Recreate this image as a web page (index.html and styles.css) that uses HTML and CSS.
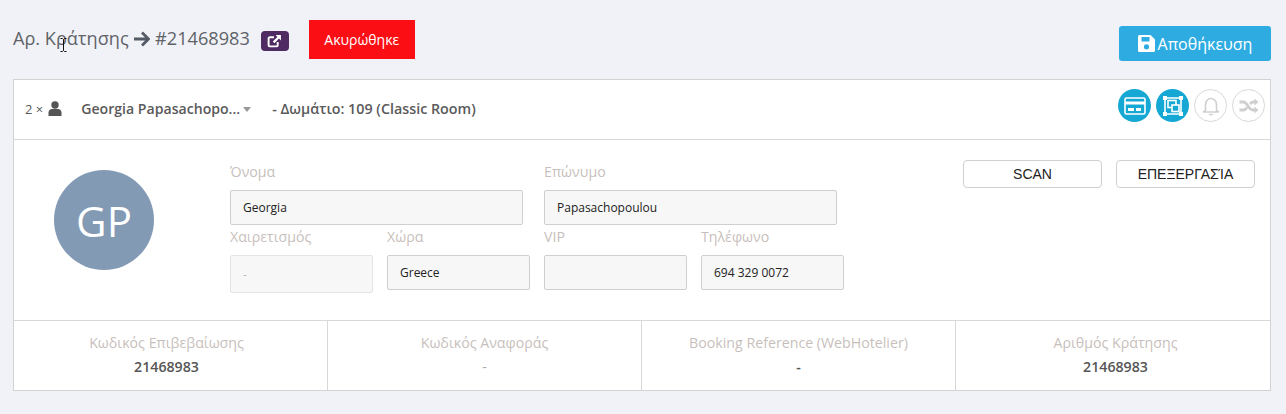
FILE: index.html
```html
<!DOCTYPE html>
<html lang="el">
<head>
<meta charset="utf-8">
<title>Κράτηση</title>
<link rel="stylesheet" href="styles.css">
</head>
<body>
<div class="top">
  <div class="title-wrap">
    <h1 class="title">Αρ. Κράτησης <svg class="arrow" viewBox="0 0 17 16" width="17" height="16"><path d="M9 1.5 L15.5 8 L9 14.5 M15 8 H1" fill="none" stroke="#555b66" stroke-width="2.8"/></svg> #21468983</h1>
    <svg class="cursor" width="7" height="14" viewBox="0 0 7 14"><path d="M0.5 0.5H2.5L3.5 1.5L4.5 0.5H6.5M3.5 1.5V12.5M0.5 13.5H2.5L3.5 12.5L4.5 13.5H6.5" fill="none" stroke="#111" stroke-width="1"/></svg>
  </div>
  <span class="ext-badge"><svg width="15" height="14" viewBox="0 0 14 13"><path d="M10 7.5V10.5A1 1 0 0 1 9 11.5H2.5A1 1 0 0 1 1.5 10.5V4A1 1 0 0 1 2.5 3H6.5" fill="none" stroke="#fff" stroke-width="1.8"/><path d="M8 1H13V6L11.2 4.2L7 8.6L5.4 7L9.7 2.7Z" fill="#fff"/></svg></span>
  <span class="status">Ακυρώθηκε</span>
  <button class="save"><svg width="17" height="17" viewBox="0 0 17 17"><path fill-rule="evenodd" d="M1.5 0H12.5L17 4.5V15.5A1.5 1.5 0 0 1 15.5 17H1.5A1.5 1.5 0 0 1 0 15.5V1.5A1.5 1.5 0 0 1 1.5 0ZM3.5 2V6.5H11.5V2ZM8.5 9.2A2.6 2.6 0 1 0 8.5 14.4A2.6 2.6 0 1 0 8.5 9.2Z" fill="#fff"/></svg>Αποθήκευση</button>
</div>

<section class="card">
  <header class="card-head">
    <span class="count">2 ×</span>
    <svg class="person" width="14" height="15" viewBox="0 0 14 15"><circle cx="7" cy="4" r="3.7" fill="#555"/><path d="M0.5 15V11.5C0.5 9 2.5 8 4 8H10C11.5 8 13.5 9 13.5 11.5V15Z" fill="#555"/></svg>
    <span class="guest">Georgia Papasachopo...</span>
    <span class="caret"></span>
    <span class="room">- Δωμάτιο: 109 (Classic Room)</span>
    <div class="head-icons">
      <span class="round on"><svg width="22" height="18" viewBox="0 0 22 18"><rect x="1" y="1" width="20" height="16" rx="1.5" fill="none" stroke="#fff" stroke-width="1.6"/><rect x="1" y="4.5" width="20" height="3" fill="#fff"/><rect x="4" y="11" width="6" height="3" fill="#fff"/><rect x="12" y="11" width="5" height="3" fill="#fff"/></svg></span>
      <span class="round on"><svg width="22" height="22" viewBox="0 0 22 22"><path d="M3 3H19V19H3Z" fill="none" stroke="#fff" stroke-width="1.6"/><g fill="#fff"><rect x="1" y="1" width="4" height="4"/><rect x="17" y="1" width="4" height="4"/><rect x="1" y="17" width="4" height="4"/><rect x="17" y="17" width="4" height="4"/></g><rect x="6" y="5.5" width="8" height="7" fill="none" stroke="#fff" stroke-width="1.6"/><rect x="10" y="10" width="7" height="6.5" fill="#16a8d5" stroke="#fff" stroke-width="1.6"/></svg></span>
      <span class="round off"><svg width="18" height="20" viewBox="0 0 18 20"><path d="M3.5 14.5V8.5C3.5 5 6 2.5 9 2.5S14.5 5 14.5 8.5V14.5L16.5 16H1.5Z" fill="none" stroke="#cfcfcf" stroke-width="1.6" stroke-linejoin="round"/><path d="M7 18Q9 19.5 11 18" fill="none" stroke="#cfcfcf" stroke-width="1.3"/></svg></span>
      <span class="round off"><svg width="20" height="16" viewBox="0 0 20 16"><path d="M0.5 4H4.5C8 4 10 12 13.5 12H16M0.5 12H4.5C6 12 7 11 8 9.5M11 6C12 4.8 12.7 4 14 4H16" fill="none" stroke="#cfcfcf" stroke-width="2.8"/><path d="M15.5 0.5L19.5 4L15.5 7.5ZM15.5 8.5L19.5 12L15.5 15.5Z" fill="#cfcfcf"/></svg></span>
    </div>
  </header>

  <div class="guest-body">
    <div class="avatar-col"><div class="avatar">GP</div></div>
    <div class="fields">
      <div class="row row-wide">
        <label class="field wide"><span class="lbl">Όνομα</span><span class="input">Georgia</span></label>
        <label class="field wide"><span class="lbl">Επώνυμο</span><span class="input">Papasachopoulou</span></label>
      </div>
      <div class="row row-narrow">
        <label class="field narrow"><span class="lbl">Χαιρετισμός</span><span class="input disabled">-</span></label>
        <label class="field narrow"><span class="lbl">Χώρα</span><span class="input">Greece</span></label>
        <label class="field narrow"><span class="lbl">VIP</span><span class="input"></span></label>
        <label class="field narrow"><span class="lbl">Τηλέφωνο</span><span class="input">694 329 0072</span></label>
      </div>
    </div>
    <div class="actions">
      <button class="btn">SCAN</button>
      <button class="btn">ΕΠΕΞΕΡΓΑΣΊΑ</button>
    </div>
  </div>

  <div class="refs">
    <div class="ref ref-first"><div class="ref-lbl">Κωδικός Επιβεβαίωσης</div><div class="ref-val">21468983</div></div>
    <div class="ref"><div class="ref-lbl">Κωδικός Αναφοράς</div><div class="ref-val dash">-</div></div>
    <div class="ref"><div class="ref-lbl">Booking Reference (WebHotelier)</div><div class="ref-val">-</div></div>
    <div class="ref ref-last"><div class="ref-lbl">Αριθμός Κράτησης</div><div class="ref-val">21468983</div></div>
  </div>
</section>
</body>
</html>
```
FILE: styles.css
```css
* { box-sizing: border-box; }
html, body { margin: 0; padding: 0; }
body {
  background: #f1f2f7;
  font-family: "Open Sans", sans-serif;
  color: #555;
  height: 414px;
  overflow: hidden;
  padding: 20px 15px 0 13px;
}
.top {
  display: flex;
  align-items: flex-start;
  height: 59px;
}
.title-wrap { position: relative; margin-top: 4px; }
.title {
  margin: 0;
  font-size: 18.15px;
  font-weight: 400;
  line-height: 28px;
  color: #5f6368;
  white-space: nowrap;
}
.arrow { vertical-align: -2px; }
.cursor { position: absolute; left: 47px; top: 14px; }
.ext-badge {
  width: 28px;
  height: 20px;
  margin: 11px 20px 0 11px;
  background: #4f2a63;
  border-radius: 4px;
  display: flex;
  align-items: center;
  justify-content: center;
}
.status {
  width: 106px;
  height: 39px;
  background: #fb0f14;
  color: #fff;
  font-size: 14px;
  display: flex;
  align-items: center;
  justify-content: center;
}
.save {
  margin: 6px 0 0 auto;
  width: 152px;
  height: 35px;
  background: #2eace2;
  border: 0;
  border-radius: 3px;
  color: #fff;
  font-family: "Open Sans", sans-serif;
  font-size: 16px;
  display: flex;
  align-items: center;
  justify-content: center;
  gap: 3px;
  padding: 0;
}
.card {
  background: #fff;
  border: 1px solid #d2d2d2;
  height: 312px;
  width: 1258px;
}
.card-head {
  height: 60px;
  border-bottom: 1px solid #d8d8d8;
  display: flex;
  align-items: center;
  padding: 0 5px 2px 11px;
  font-size: 13px;
  font-weight: 600;
  color: #5a5a5a;
}
.count { font-weight: 400; font-size: 13px; }
.person { margin: 0 0 0 5px; }
.guest { margin-left: 19px; font-size: 14.1px; }
.caret {
  width: 0; height: 0;
  border-left: 4px solid transparent;
  border-right: 4px solid transparent;
  border-top: 5px solid #999;
  margin: 2px 0 0 3px;
}
.room { margin-left: 21px; font-size: 14.3px; }
.head-icons { margin-left: auto; display: flex; gap: 5px; margin-top: -6px; }
.round {
  width: 33px; height: 33px;
  border-radius: 50%;
  display: flex; align-items: center; justify-content: center;
}
.on { background: #16a8d5; }
.off { border: 1px solid #d8d8d8; background: #fff; }
.guest-body { display: flex; height: 181px; border-bottom: 1px solid #d8d8d8; }
.avatar-col { width: 216px; padding: 30px 0 0 40px; }
.avatar {
  width: 100px; height: 100px;
  border-radius: 50%;
  background: #839ab5;
  color: #fff;
  font-size: 42px;
  display: flex; align-items: center; justify-content: center;
}
.fields { width: 614px; padding-top: 21px; }
.row { display: flex; }
.row-wide { gap: 21px; height: 66px; }
.row-narrow { gap: 14px; margin-top: -1px; }
.field { display: flex; flex-direction: column; }
.wide { width: 293px; }
.narrow { width: 143px; }
.lbl {
  font-size: 14.2px;
  line-height: 20px;
  color: #c8bfbc;
  height: 29px;
}
.row-wide .lbl { padding-top: 1px; }
.row-narrow .lbl { padding-top: 1px; }
.input {
  height: 35px;
  background: #f7f7f7;
  border: 1px solid #cfcfcf;
  border-radius: 2px;
  font-size: 12px;
  color: #222;
  display: flex;
  align-items: center;
  padding: 0 12px;
}
.disabled { height: 38px; border-color: #e4e4e4; color: #bbb; background: #f7f7f7; }
.actions { display: flex; gap: 14px; margin-left: 119px; padding-top: 20px; }
.btn {
  width: 139px;
  height: 28px;
  background: #fff;
  border: 1px solid #cfcfcf;
  border-radius: 4px;
  font-family: "Liberation Sans", sans-serif;
  font-size: 14px;
  color: #222;
  padding: 0;
}
.refs { display: grid; grid-template-columns: repeat(4, 314px); height: 69px; }
.ref {
  border-right: 1px solid #d8d8d8;
  text-align: center;
  padding-top: 12px;
}
.ref-first { padding-right: 8px; }
.ref-last { border-right: 0; padding-left: 5px; }
.ref-lbl { font-size: 14.2px; line-height: 20px; color: #c8bfbc; }
.ref-val { font-size: 14.2px; line-height: 20px; margin-top: 4px; font-weight: 600; color: #555; }
.dash { font-weight: 400; color: #aaa; }
```
